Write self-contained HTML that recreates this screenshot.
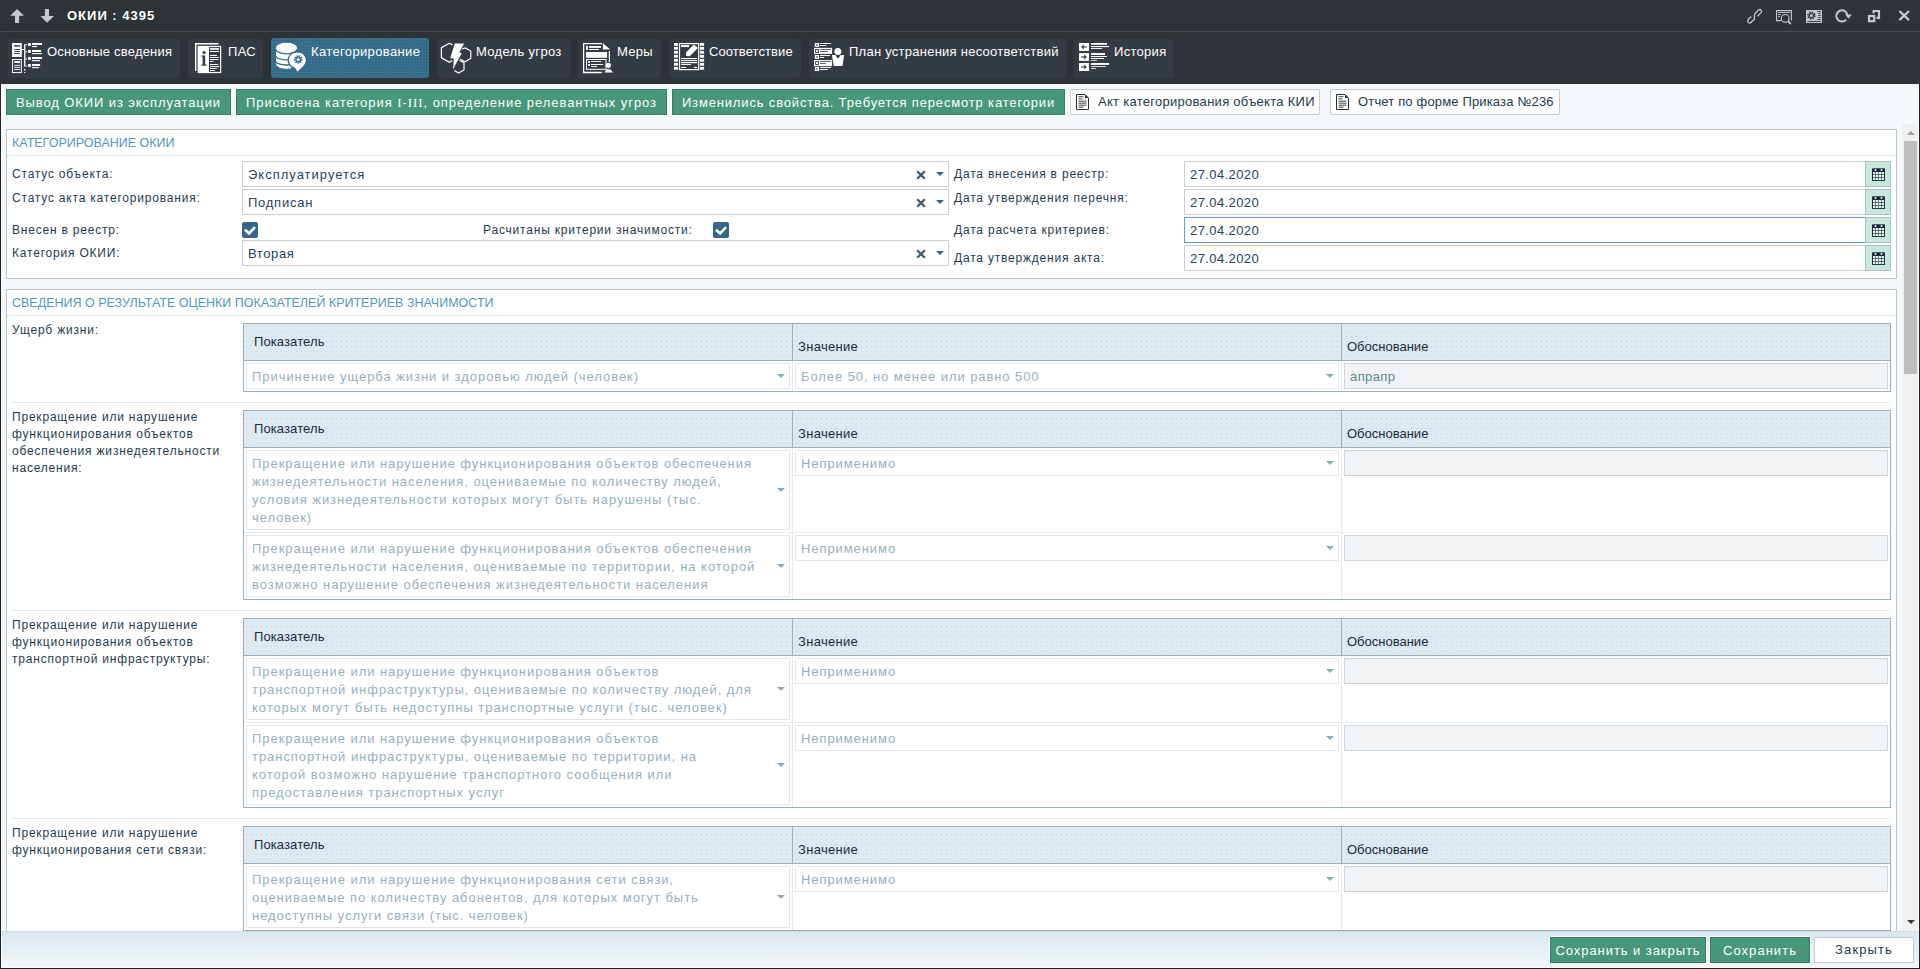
<!DOCTYPE html><html><head><meta charset="utf-8"><style>
*{box-sizing:border-box;margin:0;padding:0}
html,body{width:1920px;height:969px;overflow:hidden}
body{position:relative;background:#1e2427;font-family:"Liberation Sans",sans-serif;color:#1f3a4e}
.a{position:absolute;white-space:nowrap}
.tab{position:absolute;top:39px;height:39px;background:#353b44;border-radius:3px}
.tab.on{top:38px;height:40px;background:#356a8b;background-image:radial-gradient(rgba(80,170,120,.45) 0.5px,transparent 0.8px);background-size:3px 3px}
.tabt{position:absolute;top:45px;font-size:13px;letter-spacing:.32px;color:#fff;line-height:14px;white-space:nowrap}
.gbtn{position:absolute;top:89px;height:26px;background:#48977b;border:1px solid #367b62;color:#fff;font-size:13px;letter-spacing:.8px;line-height:25px;text-align:center;box-shadow:0 0 0 1px #fff;white-space:nowrap}
.wbtn{position:absolute;top:89px;height:26px;background:#fff;border:1px solid #c3ccd0;border-radius:2px;color:#203a4c;font-size:13px;letter-spacing:.28px;line-height:24px;white-space:nowrap}
.panel{position:absolute;left:6px;width:1891px;background:#fff;border:1px solid #bcc6cb}
.ph{position:absolute;font-size:12.5px;color:#5396be;letter-spacing:0;line-height:14px;white-space:nowrap}
.dots{position:absolute;height:1px;background-image:linear-gradient(90deg,#c8d0d4 50%,transparent 50%);background-size:2px 1px}
.lbl{position:absolute;font-size:12px;letter-spacing:.8px;color:#1f3b50;line-height:17px;white-space:nowrap}
.inp{position:absolute;height:26px;background:#fff;border:1px solid #c9ced1}
.val{position:absolute;font-size:13px;letter-spacing:.8px;color:#24445a;line-height:14px;white-space:nowrap}
.cal{position:absolute;width:26px;height:26px;background:#c7e6dc;border:1px solid #a9c0c6}
.chk{position:absolute;width:16px;height:16px;background:#34678a;border-radius:2px}
.tbl{position:absolute;left:243px;width:1648px;background:#fff;border:1px solid #9fb0b9}
.th{position:absolute;left:244px;width:1646px;height:37px;background:#ddeaf1;background-image:radial-gradient(rgba(150,165,175,.35) .5px,transparent .8px);background-size:5px 5px;border-bottom:1px solid #9fb0b9}
.thd{position:absolute;width:1px;height:38px;background:#9fb0b9}
.tbd{position:absolute;width:1px;background:#e4eaed}
.trd{position:absolute;left:244px;width:1646px;height:1px;background:#e4eaed}
.hdr{position:absolute;font-size:13px;color:#1d2d38;line-height:14px;white-space:nowrap}
.ti{position:absolute;background:#fff;border:1px solid #e0e6e9}
.ti3{position:absolute;height:26px;background:#f1f3f5;border:1px solid #ccd6dc}
.ph2{position:absolute;font-size:13px;letter-spacing:.95px;color:#97afbe;line-height:18px;white-space:nowrap}
.arr{position:absolute;width:0;height:0;border-left:4px solid transparent;border-right:4px solid transparent;border-top:4px solid #8ea8b7}
.xb{position:absolute}
</style></head><body>
<div class="a" style="left:0;top:0;width:1920px;height:84px;background:#2d3336"></div>
<div class="a" style="left:1px;top:31px;width:1919px;height:1px;background:#474d52"></div>
<svg class="a" style="left:0;top:0" width="60" height="30" viewBox="0 0 60 30"><path d="M17.1 8.9 L24 15.7 L19.1 15.7 L19.1 23 L15 23 L15 15.7 L10.2 15.7 Z" fill="#c8c8c8"/><path d="M47.1 22.8 L54 16.1 L49 16.1 L49 8.9 L44.9 8.9 L44.9 16.1 L40.4 16.1 Z" fill="#c8c8c8"/></svg>
<div class="a" style="left:67px;top:9px;font-size:13px;font-weight:bold;color:#fff;letter-spacing:1px;line-height:14px">ОКИИ : 4395</div>
<div class="tab" style="left:8px;width:172px"></div>
<div class="tab" style="left:188px;width:75px"></div>
<div class="tab on" style="left:271px;width:158px"></div>
<div class="tab" style="left:437px;width:133px"></div>
<div class="tab" style="left:578px;width:83px"></div>
<div class="tab" style="left:669px;width:132px"></div>
<div class="tab" style="left:809px;width:257px"></div>
<div class="tab" style="left:1074px;width:100px"></div>
<div class="tabt" style="left:47px;letter-spacing:0.2px">Основные сведения</div>
<div class="tabt" style="left:228px;letter-spacing:0.3px">ПАС</div>
<div class="tabt" style="left:311px;letter-spacing:0.36px">Категорирование</div>
<div class="tabt" style="left:476px;letter-spacing:0.32px">Модель угроз</div>
<div class="tabt" style="left:617px;letter-spacing:0.3px">Меры</div>
<div class="tabt" style="left:709px;letter-spacing:0.08px">Соответствие</div>
<div class="tabt" style="left:849px;letter-spacing:0.25px">План устранения несоответствий</div>
<div class="tabt" style="left:1114px;letter-spacing:0.3px">История</div>
<svg class="a" style="left:8px;top:38px" width="40" height="40" viewBox="0 0 40 40"><rect x="4.1" y="5" width="9.7" height="14" fill="#fff"/><rect x="6.2" y="7.2" width="5.8" height="1.5" fill="#353b44"/><rect x="6.2" y="11" width="5.8" height="0.9" fill="#353b44"/><rect x="6.2" y="13" width="5.8" height="0.9" fill="#353b44"/><rect x="6.2" y="15.1" width="5.8" height="0.9" fill="#353b44"/><rect x="4.6" y="21.5" width="8.7" height="13.1" fill="none" stroke="#fff" stroke-width="1"/><rect x="6.2" y="23.1" width="5.8" height="1.9" fill="#fff"/><rect x="6.2" y="26.9" width="5.8" height="0.9" fill="#fff"/><rect x="6.2" y="28.9" width="5.8" height="0.9" fill="#fff"/><rect x="6.2" y="31" width="5.8" height="0.9" fill="#fff"/><rect x="16.1" y="6.2" width="1.3" height="22.3" fill="#fff"/><rect x="13.8" y="11" width="2.3" height="1" fill="#fff"/><rect x="17.4" y="6.2" width="1.6" height="1" fill="#fff"/><rect x="17.4" y="13.4" width="1.6" height="1" fill="#fff"/><rect x="17.4" y="20.5" width="1.6" height="1" fill="#fff"/><rect x="17.4" y="27.5" width="1.6" height="1" fill="#fff"/><rect x="16.1" y="31" width="1.2" height="1.6" fill="#fff"/><rect x="16.1" y="34" width="1.2" height="1" fill="#fff"/><rect x="20" y="5" width="2.9" height="2.9" fill="#fff"/><rect x="20" y="12" width="2.9" height="2.9" fill="#fff"/><rect x="20" y="19" width="2.9" height="2.9" fill="#fff"/><rect x="20" y="26" width="2.9" height="2.9" fill="#fff"/><rect x="24" y="5" width="10.1" height="2" fill="#fff"/><rect x="24" y="8" width="5.1" height="1.1" fill="#fff"/><rect x="24" y="12" width="9.1" height="2" fill="#fff"/><rect x="24" y="15.1" width="10.1" height="1.1" fill="#fff"/><rect x="24" y="19" width="10.1" height="2" fill="#fff"/><rect x="24" y="22.1" width="8.1" height="1.1" fill="#fff"/><rect x="24" y="26" width="8.1" height="2" fill="#fff"/><rect x="24" y="29.1" width="7.1" height="1.1" fill="#fff"/></svg>
<svg class="a" style="left:190px;top:38px" width="40" height="40" viewBox="0 0 40 40"><path d="M5.7 33 V5.7 H28.5" fill="none" stroke="#fff" stroke-width="1.4"/><rect x="7.6" y="7.85" width="23.6" height="27.25" fill="#fff"/><circle cx="14" cy="14.5" r="1.6" fill="#353b44"/><rect x="12.6" y="17.4" width="2.6" height="9.8" fill="#353b44"/><rect x="11.2" y="26.6" width="5.3" height="1.1" fill="#353b44"/><rect x="11.2" y="17.6" width="2.4" height="0.9" fill="#353b44"/><rect x="19" y="9.1" width="11" height="24.8" fill="#353b44"/><rect x="20" y="10.1" width="9" height="1.7" fill="#fff"/><rect x="20" y="13" width="9" height="1" fill="#fff"/><rect x="20" y="16.9" width="7" height="1.1" fill="#fff"/><rect x="20" y="19" width="9" height="1" fill="#fff"/><rect x="20" y="21" width="8.2" height="1.1" fill="#fff"/><rect x="20" y="23.1" width="3.1" height="0.9" fill="#fff"/><rect x="20" y="26" width="8.2" height="1" fill="#fff"/><rect x="20" y="28.1" width="9" height="1" fill="#fff"/><rect x="20" y="30.1" width="7" height="0.9" fill="#fff"/><rect x="20" y="32" width="5" height="1" fill="#fff"/></svg>
<svg class="a" style="left:271px;top:38px" width="40" height="40" viewBox="0 0 40 40"><path d="M5 9.4 A10.5 4.6 0 0 1 26 9.4 V26 A10.5 4.8 0 0 1 5 26 Z" fill="#fff"/><path d="M5 11.2 A10.5 4.6 0 0 0 26 11.2" fill="none" stroke="#356a8b" stroke-width="1.3"/><path d="M5 18.2 A10.5 3.6 0 0 0 26 18.2" fill="none" stroke="#356a8b" stroke-width="1.3"/><path d="M5 23.4 A10.5 3.6 0 0 0 26 23.4" fill="none" stroke="#356a8b" stroke-width="1.3"/><path d="M27.2 14.2 A8.1 8.1 0 0 1 33.6 27.4 L26.4 34.8 L23.6 30.2 A8.1 8.1 0 0 1 27.2 14.2 Z" fill="#fff" stroke="#356a8b" stroke-width="1.3"/><circle cx="27.3" cy="21.5" r="3.4" fill="none" stroke="#356a8b" stroke-width="1.8" stroke-dasharray="1.35 0.95"/><circle cx="27.3" cy="21.5" r="2.3" fill="none" stroke="#356a8b" stroke-width="1.4"/></svg>
<svg class="a" style="left:437px;top:38px" width="40" height="40" viewBox="0 0 40 40"><path d="M12.4 5.2 L4.4 9.6 L4.4 19.8 L12.4 24.3 L15.4 22.6 M15.6 7 L12.4 5.2" fill="none" stroke="#fff" stroke-width="1.2"/><path d="M25 11 L28.3 9.9 L33.8 13 L33.8 20.3 L28 23.7 L23.3 21.3" fill="none" stroke="#fff" stroke-width="1.2"/><path d="M22.6 22.3 L27 24.8 L27 32 L21.5 35 L17.3 32.6" fill="none" stroke="#fff" stroke-width="1.2"/><polygon points="17.8,5.4 27.1,5.4 22.3,14.5 24.8,15.3 15.9,31.4 16.9,20.7 13.2,20.2" fill="#fff"/></svg>
<svg class="a" style="left:578px;top:38px" width="40" height="40" viewBox="0 0 40 40"><path d="M24 5.6 H5.6 V34.5 H24" fill="none" stroke="#fff" stroke-width="1.3"/><rect x="30.8" y="13" width="1.2" height="11" fill="#fff"/><polygon points="24.8,5 32.2,11.6 24.8,11.6" fill="#fff"/><rect x="8" y="7.9" width="1.9" height="4.1" fill="#fff"/><rect x="11" y="8" width="12" height="1.9" fill="#fff"/><rect x="11" y="11" width="10" height="1" fill="#fff"/><rect x="8" y="14" width="21.1" height="5.8" fill="#fff"/><rect x="8.5" y="21.5" width="19.5" height="9.8" fill="none" stroke="#fff" stroke-width="1"/><rect x="10.1" y="23.1" width="1.9" height="1.9" fill="#fff"/><rect x="10.1" y="26" width="1.9" height="2" fill="#fff"/><rect x="13" y="23.1" width="10.1" height="0.9" fill="#fff"/><rect x="13" y="26" width="12.2" height="1" fill="#fff"/><rect x="13" y="28.1" width="6" height="0.9" fill="#fff"/><circle cx="30.4" cy="27.3" r="2.6" fill="#fff"/><polygon points="26.4,34.4 35.1,34.4 32.2,31.2 28.5,31.2" fill="#fff"/></svg>
<svg class="a" style="left:669px;top:38px" width="40" height="40" viewBox="0 0 40 40"><rect x="5" y="5" width="3.9" height="2.8" fill="#fff"/><rect x="5" y="8.9" width="3.9" height="2.8" fill="#fff"/><rect x="5" y="12.9" width="3.9" height="2.8" fill="#fff"/><rect x="5" y="16.9" width="3.9" height="2.8" fill="#fff"/><rect x="5" y="20.9" width="3.9" height="2.8" fill="#fff"/><rect x="5" y="24.9" width="3.9" height="2.8" fill="#fff"/><rect x="5" y="28.9" width="3.9" height="2.8" fill="#fff"/><rect x="31" y="5" width="4.1" height="2.8" fill="#fff"/><rect x="31" y="8.9" width="4.1" height="2.8" fill="#fff"/><rect x="31" y="12.9" width="4.1" height="2.8" fill="#fff"/><rect x="31" y="16.9" width="4.1" height="2.8" fill="#fff"/><rect x="31" y="20.9" width="4.1" height="2.8" fill="#fff"/><rect x="31" y="24.9" width="4.1" height="2.8" fill="#fff"/><rect x="31" y="28.9" width="4.1" height="2.8" fill="#fff"/><rect x="10.5" y="5.6" width="19.2" height="26" fill="none" stroke="#fff" stroke-width="1.2"/><rect x="12" y="7" width="8" height="2.1" fill="#fff"/><rect x="12" y="20" width="16.1" height="1.1" fill="#fff"/><rect x="12" y="22.1" width="16.1" height="1" fill="#fff"/><rect x="12" y="24" width="16.1" height="1.2" fill="#fff"/><rect x="12" y="26" width="9.9" height="1" fill="#fff"/><rect x="12" y="28.9" width="5" height="1.1" fill="#fff"/><rect x="25" y="28.9" width="3.1" height="1.1" fill="#fff"/><polygon points="17,14.5 24.8,6.6 28.9,9.9 20.7,18.2 17.1,18" fill="#fff"/></svg>
<svg class="a" style="left:809px;top:38px" width="40" height="40" viewBox="0 0 40 40"><rect x="5.8" y="5" width="4.3" height="3.9" fill="#fff"/><rect x="7.3" y="6.4" width="1.3" height="1.2" fill="#000"/><rect x="11" y="5" width="11.1" height="1" fill="#fff"/><rect x="11" y="7" width="6.1" height="1.05" fill="#fff"/><rect x="5" y="9.9" width="18.1" height="6" fill="#fff"/><rect x="6.6" y="11.5" width="3" height="2.9" fill="none" stroke="#353b44" stroke-width="0.9"/><rect x="11.2" y="11.2" width="10.7" height="0.8" fill="#353b44"/><rect x="11.2" y="13" width="7.8" height="0.8" fill="#353b44"/><rect x="5.8" y="17" width="4.3" height="3.9" fill="#fff"/><rect x="7.3" y="18.4" width="1.3" height="1.2" fill="#000"/><rect x="11" y="17" width="10" height="1" fill="#fff"/><rect x="11" y="19" width="4.1" height="1" fill="#fff"/><rect x="5" y="22.1" width="18.1" height="6" fill="#fff"/><rect x="6.6" y="23.6" width="3" height="2.9" fill="none" stroke="#353b44" stroke-width="0.9"/><rect x="11.2" y="23.2" width="10.7" height="0.8" fill="#353b44"/><rect x="11.2" y="25.2" width="5.8" height="0.8" fill="#353b44"/><rect x="5.8" y="28.9" width="4.3" height="4.1" fill="#fff"/><rect x="7.3" y="30.4" width="1.3" height="1.2" fill="#000"/><rect x="11" y="28.9" width="11.1" height="1" fill="#fff"/><rect x="11" y="31" width="8" height="1" fill="#fff"/><circle cx="28.9" cy="13.4" r="3.5" fill="#fff"/><polygon points="22.9,17 26.3,17 29,20.7 31.7,17 35.1,17 33.5,28.1 24.8,28.1" fill="#fff"/></svg>
<svg class="a" style="left:1074px;top:38px" width="40" height="40" viewBox="0 0 40 40"><rect x="5" y="5" width="10.1" height="8" fill="#fff"/><rect x="5" y="15.1" width="10.1" height="7.8" fill="#fff"/><rect x="5" y="25" width="10.1" height="8" fill="#fff"/><rect x="8.3" y="8.4" width="4.5" height="1.1" fill="#353b44"/><polygon points="7.2,8.9 9.7,6.2 9.7,11.6" fill="#353b44"/><rect x="7.2" y="18.4" width="4" height="1.2" fill="#353b44"/><polygon points="12.8,19 10.3,16.3 10.3,21.7" fill="#353b44"/><rect x="7.2" y="28.3" width="4" height="1.2" fill="#353b44"/><polygon points="12.8,28.9 10.3,26.2 10.3,31.6" fill="#353b44"/><rect x="17" y="5" width="16" height="1.8" fill="#fff"/><rect x="17" y="8" width="18.1" height="1.1" fill="#fff"/><rect x="17" y="10.1" width="11.1" height="0.9" fill="#fff"/><rect x="17" y="15.1" width="14" height="1.9" fill="#fff"/><rect x="17" y="18" width="16" height="1" fill="#fff"/><rect x="17" y="20" width="13" height="1" fill="#fff"/><rect x="17" y="22.1" width="5.9" height="0.8" fill="#fff"/><rect x="17" y="25" width="18.1" height="1.9" fill="#fff"/><rect x="17" y="28.1" width="15" height="0.8" fill="#fff"/><rect x="17" y="30.2" width="4.9" height="0.8" fill="#fff"/></svg>
<div class="a" style="left:1px;top:84px;width:1918px;height:847px;background:#f3f8fb;border-left:1px solid #fff"></div>
<div class="gbtn" style="left:6px;width:225px;letter-spacing:.9px">Вывод ОКИИ из эксплуатации</div>
<div class="gbtn" style="left:236px;width:431px;letter-spacing:.94px">Присвоена категория <span style="font-family:Liberation Serif">I</span>-<span style="font-family:Liberation Serif">III</span>, определение релевантных угроз</div>
<div class="gbtn" style="left:672px;width:393px;letter-spacing:.84px">Изменились свойства. Требуется пересмотр категории</div>
<div class="wbtn" style="left:1070px;width:250px"><span style="position:absolute;left:27px">Акт категорирования объекта КИИ</span></div>
<div class="wbtn" style="left:1330px;width:230px"><span style="position:absolute;left:27px;letter-spacing:.16px">Отчет по форме Приказа №236</span></div>
<div class="panel" style="top:129px;height:150px"></div>
<div class="ph" style="left:12px;top:136px">КАТЕГОРИРОВАНИЕ ОКИИ</div>
<div class="dots" style="left:7px;top:155px;width:1889px"></div>
<div class="lbl" style="left:12px;top:166px">Статус объекта:</div>
<div class="lbl" style="left:12px;top:190px">Статус акта категорирования:</div>
<div class="lbl" style="left:12px;top:222px">Внесен в реестр:</div>
<div class="lbl" style="left:12px;top:245px">Категория ОКИИ:</div>
<div class="lbl" style="left:483px;top:222px">Расчитаны критерии значимости:</div>
<div class="inp" style="left:242px;top:161px;width:707px"></div>
<div class="val" style="left:248px;top:168px;letter-spacing:1.0px">Эксплуатируется</div>
<div class="inp" style="left:242px;top:189px;width:707px"></div>
<div class="val" style="left:248px;top:196px;letter-spacing:0.75px">Подписан</div>
<div class="inp" style="left:242px;top:240px;width:707px"></div>
<div class="val" style="left:248px;top:247px;letter-spacing:0.6px">Вторая</div>
<div class="chk" style="left:242px;top:222px"></div>
<div class="chk" style="left:713px;top:222px"></div>
<div class="lbl" style="left:954px;top:166px">Дата внесения в реестр:</div>
<div class="lbl" style="left:954px;top:190px">Дата утверждения перечня:</div>
<div class="lbl" style="left:954px;top:222px">Дата расчета критериев:</div>
<div class="lbl" style="left:954px;top:250px">Дата утверждения акта:</div>
<div class="inp" style="left:1184px;top:161px;width:682px"></div>
<div class="cal" style="left:1865px;top:161px"></div>
<div class="val" style="left:1190px;top:168px;letter-spacing:.4px">27.04.2020</div>
<div class="inp" style="left:1184px;top:189px;width:682px"></div>
<div class="cal" style="left:1865px;top:189px"></div>
<div class="val" style="left:1190px;top:196px;letter-spacing:.4px">27.04.2020</div>
<div class="inp" style="left:1184px;top:217px;width:682px;border-color:#5aa0dc"></div>
<div class="cal" style="left:1865px;top:217px"></div>
<div class="val" style="left:1190px;top:224px;letter-spacing:.4px">27.04.2020</div>
<div class="inp" style="left:1184px;top:245px;width:682px"></div>
<div class="cal" style="left:1865px;top:245px"></div>
<div class="val" style="left:1190px;top:252px;letter-spacing:.4px">27.04.2020</div>
<svg class="a" style="left:1740px;top:4px" width="180" height="24" viewBox="1740 4 180 24"><path d="M1754.4 14.2 V19.3 L1750.8 22.6 Q1749 23.6 1747.9 22 Q1747 20.8 1748.4 19.2 L1751.3 16.6" fill="none" stroke="#c8c8c8" stroke-width="1.3"/><path d="M1754.4 14.2 L1758.4 10 Q1760 8.8 1761.2 10.3 Q1762 11.6 1760.8 12.9 L1757.6 16.2" fill="none" stroke="#c8c8c8" stroke-width="1.3"/><path d="M1781 20.6 H1776.6 V10.6 H1791.4 V20.5" fill="none" stroke="#c8c8c8" stroke-width="1.1"/><rect x="1778" y="12.1" width="12" height="0.9" fill="#c8c8c8"/><rect x="1778" y="14" width="3" height="0.9" fill="#c8c8c8"/><rect x="1778" y="16" width="2" height="0.9" fill="#c8c8c8"/><circle cx="1785.2" cy="18.4" r="3.9" fill="none" stroke="#c8c8c8" stroke-width="1.2"/><path d="M1788 21.2 L1790.8 24" stroke="#c8c8c8" stroke-width="1.8"/><rect x="1806" y="10" width="16" height="13" fill="#c8c8c8"/><circle cx="1811.4" cy="15.6" r="3.2" fill="none" stroke="#2d3336" stroke-width="2" stroke-dasharray="1.4 1.1"/><circle cx="1811.4" cy="15.6" r="2.1" fill="none" stroke="#2d3336" stroke-width="1.1"/><rect x="1817.2" y="11" width="3.6" height="0.9" fill="#2d3336"/><rect x="1818.2" y="13" width="2.6" height="0.9" fill="#2d3336"/><rect x="1818.2" y="15" width="2.6" height="0.9" fill="#2d3336"/><rect x="1818.2" y="17" width="2.6" height="0.9" fill="#2d3336"/><rect x="1817.2" y="19" width="3.6" height="0.9" fill="#2d3336"/><rect x="1807.3" y="21" width="13.5" height="0.9" fill="#2d3336"/><path d="M1846.2 19.6 A5.6 5.6 0 1 1 1847.5 15.2" fill="none" stroke="#c8c8c8" stroke-width="2"/><polygon points="1845.1,14.4 1851.9,14.4 1848.5,18.8" fill="#c8c8c8"/><path d="M1873.6 13.6 V11 H1879 V17.9 H1876.4" fill="none" stroke="#c8c8c8" stroke-width="2.2"/><rect x="1869" y="16" width="5.2" height="5.2" fill="none" stroke="#c8c8c8" stroke-width="2.2"/><path d="M1899.4 11 L1909 20.2 M1909 11 L1899.4 20.2" stroke="#c8c8c8" stroke-width="2.4"/></svg>
<svg class="a" style="left:1076px;top:94px" width="13" height="16" viewBox="0 0 13 16"><path d="M0.5 0.5 H9 L12.5 4 V15.5 H0.5 Z" fill="#fff" stroke="#2a2f33" stroke-width="1"/><path d="M9 0.5 V4 H12.5 Z" fill="#2a2f33"/><rect x="2.5" y="2.3" width="5" height="0.9" fill="#2a2f33"/><rect x="2.5" y="4.5" width="4" height="0.9" fill="#2a2f33"/><rect x="2.5" y="6.7" width="8" height="0.9" fill="#2a2f33"/><rect x="2.5" y="8.7" width="8" height="0.9" fill="#2a2f33"/><rect x="2.5" y="10.7" width="8" height="0.9" fill="#2a2f33"/><rect x="2.5" y="12.7" width="5" height="0.9" fill="#2a2f33"/></svg>
<svg class="a" style="left:1336px;top:94px" width="13" height="16" viewBox="0 0 13 16"><path d="M0.5 0.5 H9 L12.5 4 V15.5 H0.5 Z" fill="#fff" stroke="#2a2f33" stroke-width="1"/><path d="M9 0.5 V4 H12.5 Z" fill="#2a2f33"/><rect x="2.5" y="2.3" width="5" height="0.9" fill="#2a2f33"/><rect x="2.5" y="4.5" width="4" height="0.9" fill="#2a2f33"/><rect x="2.5" y="6.7" width="8" height="0.9" fill="#2a2f33"/><rect x="2.5" y="8.7" width="8" height="0.9" fill="#2a2f33"/><rect x="2.5" y="10.7" width="8" height="0.9" fill="#2a2f33"/><rect x="2.5" y="12.7" width="5" height="0.9" fill="#2a2f33"/></svg>
<svg class="a" style="left:242px;top:222px" width="16" height="16" viewBox="0 0 16 16"><path d="M3 7.8 L7 11.4 L13 5.2" fill="none" stroke="#fff" stroke-width="2.6"/></svg>
<svg class="a" style="left:713px;top:222px" width="16" height="16" viewBox="0 0 16 16"><path d="M3 7.8 L7 11.4 L13 5.2" fill="none" stroke="#fff" stroke-width="2.6"/></svg>
<svg class="a" style="left:916px;top:170px" width="10" height="10" viewBox="0 0 10 10"><path d="M1.2 1.2 L8.8 8.8 M8.8 1.2 L1.2 8.8" stroke="#3f5c68" stroke-width="2.2"/></svg>
<div class="arr" style="left:936px;top:172px;border-top-color:#2f6a8c"></div>
<svg class="a" style="left:916px;top:198px" width="10" height="10" viewBox="0 0 10 10"><path d="M1.2 1.2 L8.8 8.8 M8.8 1.2 L1.2 8.8" stroke="#3f5c68" stroke-width="2.2"/></svg>
<div class="arr" style="left:936px;top:200px;border-top-color:#2f6a8c"></div>
<svg class="a" style="left:916px;top:249px" width="10" height="10" viewBox="0 0 10 10"><path d="M1.2 1.2 L8.8 8.8 M8.8 1.2 L1.2 8.8" stroke="#3f5c68" stroke-width="2.2"/></svg>
<div class="arr" style="left:936px;top:251px;border-top-color:#2f6a8c"></div>
<svg class="a" style="left:1872px;top:168px" width="13" height="13" viewBox="0 0 13 13"><path d="M0 1.2 Q0 0.2 1 0.2 H12 Q13 0.2 13 1.2 V13 H0 Z" fill="#1a2a3a"/><rect x="1.0" y="4.0" width="2.4" height="2.3" fill="#e2f4ee"/><rect x="1.0" y="6.9" width="2.4" height="2.3" fill="#e2f4ee"/><rect x="1.0" y="9.8" width="2.4" height="2.3" fill="#e2f4ee"/><rect x="3.9" y="4.0" width="2.4" height="2.3" fill="#e2f4ee"/><rect x="3.9" y="6.9" width="2.4" height="2.3" fill="#e2f4ee"/><rect x="3.9" y="9.8" width="2.4" height="2.3" fill="#e2f4ee"/><rect x="6.8" y="4.0" width="2.4" height="2.3" fill="#e2f4ee"/><rect x="6.8" y="6.9" width="2.4" height="2.3" fill="#e2f4ee"/><rect x="6.8" y="9.8" width="2.4" height="2.3" fill="#e2f4ee"/><rect x="9.7" y="4.0" width="2.4" height="2.3" fill="#e2f4ee"/><rect x="9.7" y="6.9" width="2.4" height="2.3" fill="#e2f4ee"/><rect x="9.7" y="9.8" width="2.4" height="2.3" fill="#e2f4ee"/><ellipse cx="3.5" cy="1.9" rx="0.9" ry="1.2" fill="#d8eef0"/><ellipse cx="9.5" cy="1.9" rx="0.9" ry="1.2" fill="#d8eef0"/></svg>
<svg class="a" style="left:1872px;top:196px" width="13" height="13" viewBox="0 0 13 13"><path d="M0 1.2 Q0 0.2 1 0.2 H12 Q13 0.2 13 1.2 V13 H0 Z" fill="#1a2a3a"/><rect x="1.0" y="4.0" width="2.4" height="2.3" fill="#e2f4ee"/><rect x="1.0" y="6.9" width="2.4" height="2.3" fill="#e2f4ee"/><rect x="1.0" y="9.8" width="2.4" height="2.3" fill="#e2f4ee"/><rect x="3.9" y="4.0" width="2.4" height="2.3" fill="#e2f4ee"/><rect x="3.9" y="6.9" width="2.4" height="2.3" fill="#e2f4ee"/><rect x="3.9" y="9.8" width="2.4" height="2.3" fill="#e2f4ee"/><rect x="6.8" y="4.0" width="2.4" height="2.3" fill="#e2f4ee"/><rect x="6.8" y="6.9" width="2.4" height="2.3" fill="#e2f4ee"/><rect x="6.8" y="9.8" width="2.4" height="2.3" fill="#e2f4ee"/><rect x="9.7" y="4.0" width="2.4" height="2.3" fill="#e2f4ee"/><rect x="9.7" y="6.9" width="2.4" height="2.3" fill="#e2f4ee"/><rect x="9.7" y="9.8" width="2.4" height="2.3" fill="#e2f4ee"/><ellipse cx="3.5" cy="1.9" rx="0.9" ry="1.2" fill="#d8eef0"/><ellipse cx="9.5" cy="1.9" rx="0.9" ry="1.2" fill="#d8eef0"/></svg>
<svg class="a" style="left:1872px;top:224px" width="13" height="13" viewBox="0 0 13 13"><path d="M0 1.2 Q0 0.2 1 0.2 H12 Q13 0.2 13 1.2 V13 H0 Z" fill="#1a2a3a"/><rect x="1.0" y="4.0" width="2.4" height="2.3" fill="#e2f4ee"/><rect x="1.0" y="6.9" width="2.4" height="2.3" fill="#e2f4ee"/><rect x="1.0" y="9.8" width="2.4" height="2.3" fill="#e2f4ee"/><rect x="3.9" y="4.0" width="2.4" height="2.3" fill="#e2f4ee"/><rect x="3.9" y="6.9" width="2.4" height="2.3" fill="#e2f4ee"/><rect x="3.9" y="9.8" width="2.4" height="2.3" fill="#e2f4ee"/><rect x="6.8" y="4.0" width="2.4" height="2.3" fill="#e2f4ee"/><rect x="6.8" y="6.9" width="2.4" height="2.3" fill="#e2f4ee"/><rect x="6.8" y="9.8" width="2.4" height="2.3" fill="#e2f4ee"/><rect x="9.7" y="4.0" width="2.4" height="2.3" fill="#e2f4ee"/><rect x="9.7" y="6.9" width="2.4" height="2.3" fill="#e2f4ee"/><rect x="9.7" y="9.8" width="2.4" height="2.3" fill="#e2f4ee"/><ellipse cx="3.5" cy="1.9" rx="0.9" ry="1.2" fill="#d8eef0"/><ellipse cx="9.5" cy="1.9" rx="0.9" ry="1.2" fill="#d8eef0"/></svg>
<svg class="a" style="left:1872px;top:252px" width="13" height="13" viewBox="0 0 13 13"><path d="M0 1.2 Q0 0.2 1 0.2 H12 Q13 0.2 13 1.2 V13 H0 Z" fill="#1a2a3a"/><rect x="1.0" y="4.0" width="2.4" height="2.3" fill="#e2f4ee"/><rect x="1.0" y="6.9" width="2.4" height="2.3" fill="#e2f4ee"/><rect x="1.0" y="9.8" width="2.4" height="2.3" fill="#e2f4ee"/><rect x="3.9" y="4.0" width="2.4" height="2.3" fill="#e2f4ee"/><rect x="3.9" y="6.9" width="2.4" height="2.3" fill="#e2f4ee"/><rect x="3.9" y="9.8" width="2.4" height="2.3" fill="#e2f4ee"/><rect x="6.8" y="4.0" width="2.4" height="2.3" fill="#e2f4ee"/><rect x="6.8" y="6.9" width="2.4" height="2.3" fill="#e2f4ee"/><rect x="6.8" y="9.8" width="2.4" height="2.3" fill="#e2f4ee"/><rect x="9.7" y="4.0" width="2.4" height="2.3" fill="#e2f4ee"/><rect x="9.7" y="6.9" width="2.4" height="2.3" fill="#e2f4ee"/><rect x="9.7" y="9.8" width="2.4" height="2.3" fill="#e2f4ee"/><ellipse cx="3.5" cy="1.9" rx="0.9" ry="1.2" fill="#d8eef0"/><ellipse cx="9.5" cy="1.9" rx="0.9" ry="1.2" fill="#d8eef0"/></svg>
<div class="panel" style="top:289px;height:660px"></div>
<div class="ph" style="left:12px;top:296px">СВЕДЕНИЯ О РЕЗУЛЬТАТЕ ОЦЕНКИ ПОКАЗАТЕЛЕЙ КРИТЕРИЕВ ЗНАЧИМОСТИ</div>
<div class="dots" style="left:7px;top:315px;width:1889px"></div>
<div class="tbl" style="top:323px;height:69px"></div>
<div class="th" style="top:324px"></div>
<div class="thd" style="left:792px;top:323px"></div>
<div class="thd" style="left:1341px;top:323px"></div>
<div class="tbd" style="left:792px;top:361px;height:30px"></div>
<div class="tbd" style="left:1341px;top:361px;height:30px"></div>
<div class="hdr" style="left:254px;top:335px;letter-spacing:.1px">Показатель</div>
<div class="hdr" style="left:798px;top:340px;letter-spacing:.3px">Значение</div>
<div class="hdr" style="left:1347px;top:340px">Обоснование</div>
<div class="lbl" style="left:12px;top:322px">Ущерб жизни:</div>
<div class="ti" style="left:246px;top:363px;width:544px;height:26px"></div>
<div class="ph2" style="left:252px;top:368px">Причинение ущерба жизни и здоровью людей (человек)</div>
<div class="arr" style="left:777px;top:374px"></div>
<div class="ti" style="left:795px;top:363px;width:544px;height:26px"></div>
<div class="ph2" style="left:801px;top:368px;letter-spacing:.92px">Более 50, но менее или равно 500</div>
<div class="arr" style="left:1326px;top:374px"></div>
<div class="ti3" style="left:1344px;top:363px;width:544px"></div>
<div class="ph2" style="left:1350px;top:368px;color:#5b8a84;letter-spacing:.4px">апрапр</div>
<div class="a" style="left:12px;top:402px;width:1878px;height:1px;background:#e6eaec"></div>
<div class="tbl" style="top:410px;height:190px"></div>
<div class="th" style="top:411px"></div>
<div class="thd" style="left:792px;top:410px"></div>
<div class="thd" style="left:1341px;top:410px"></div>
<div class="tbd" style="left:792px;top:448px;height:151px"></div>
<div class="tbd" style="left:1341px;top:448px;height:151px"></div>
<div class="hdr" style="left:254px;top:422px;letter-spacing:.1px">Показатель</div>
<div class="hdr" style="left:798px;top:427px;letter-spacing:.3px">Значение</div>
<div class="hdr" style="left:1347px;top:427px">Обоснование</div>
<div class="lbl" style="left:12px;top:409px">Прекращение или нарушение<br>функционирования объектов<br>обеспечения жизнедеятельности<br>населения:</div>
<div class="ti" style="left:246px;top:450px;width:544px;height:80px"></div>
<div class="ph2" style="left:252px;top:455px">Прекращение или нарушение функционирования объектов обеспечения<br>жизнедеятельности населения, оцениваемые по количеству людей,<br>условия жизнедеятельности которых могут быть нарушены (тыс.<br>человек)</div>
<div class="arr" style="left:777px;top:488px"></div>
<div class="ti" style="left:795px;top:450px;width:544px;height:26px"></div>
<div class="ph2" style="left:801px;top:455px;letter-spacing:.92px">Неприменимо</div>
<div class="arr" style="left:1326px;top:461px"></div>
<div class="ti3" style="left:1344px;top:450px;width:544px"></div>
<div class="trd" style="top:532px"></div>
<div class="ti" style="left:246px;top:535px;width:544px;height:62px"></div>
<div class="ph2" style="left:252px;top:540px">Прекращение или нарушение функционирования объектов обеспечения<br>жизнедеятельности населения, оцениваемые по территории, на которой<br>возможно нарушение обеспечения жизнедеятельности населения</div>
<div class="arr" style="left:777px;top:564px"></div>
<div class="ti" style="left:795px;top:535px;width:544px;height:26px"></div>
<div class="ph2" style="left:801px;top:540px;letter-spacing:.92px">Неприменимо</div>
<div class="arr" style="left:1326px;top:546px"></div>
<div class="ti3" style="left:1344px;top:535px;width:544px"></div>
<div class="a" style="left:12px;top:610px;width:1878px;height:1px;background:#e6eaec"></div>
<div class="tbl" style="top:618px;height:190px"></div>
<div class="th" style="top:619px"></div>
<div class="thd" style="left:792px;top:618px"></div>
<div class="thd" style="left:1341px;top:618px"></div>
<div class="tbd" style="left:792px;top:656px;height:151px"></div>
<div class="tbd" style="left:1341px;top:656px;height:151px"></div>
<div class="hdr" style="left:254px;top:630px;letter-spacing:.1px">Показатель</div>
<div class="hdr" style="left:798px;top:635px;letter-spacing:.3px">Значение</div>
<div class="hdr" style="left:1347px;top:635px">Обоснование</div>
<div class="lbl" style="left:12px;top:617px">Прекращение или нарушение<br>функционирования объектов<br>транспортной инфраструктуры:</div>
<div class="ti" style="left:246px;top:658px;width:544px;height:62px"></div>
<div class="ph2" style="left:252px;top:663px">Прекращение или нарушение функционирования объектов<br>транспортной инфраструктуры, оцениваемые по количеству людей, для<br>которых могут быть недоступны транспортные услуги (тыс. человек)</div>
<div class="arr" style="left:777px;top:687px"></div>
<div class="ti" style="left:795px;top:658px;width:544px;height:26px"></div>
<div class="ph2" style="left:801px;top:663px;letter-spacing:.92px">Неприменимо</div>
<div class="arr" style="left:1326px;top:669px"></div>
<div class="ti3" style="left:1344px;top:658px;width:544px"></div>
<div class="trd" style="top:722px"></div>
<div class="ti" style="left:246px;top:725px;width:544px;height:80px"></div>
<div class="ph2" style="left:252px;top:730px">Прекращение или нарушение функционирования объектов<br>транспортной инфраструктуры, оцениваемые по территории, на<br>которой возможно нарушение транспортного сообщения или<br>предоставления транспортных услуг</div>
<div class="arr" style="left:777px;top:763px"></div>
<div class="ti" style="left:795px;top:725px;width:544px;height:26px"></div>
<div class="ph2" style="left:801px;top:730px;letter-spacing:.92px">Неприменимо</div>
<div class="arr" style="left:1326px;top:736px"></div>
<div class="ti3" style="left:1344px;top:725px;width:544px"></div>
<div class="a" style="left:12px;top:818px;width:1878px;height:1px;background:#e6eaec"></div>
<div class="tbl" style="top:826px;height:105px"></div>
<div class="th" style="top:827px"></div>
<div class="thd" style="left:792px;top:826px"></div>
<div class="thd" style="left:1341px;top:826px"></div>
<div class="tbd" style="left:792px;top:864px;height:66px"></div>
<div class="tbd" style="left:1341px;top:864px;height:66px"></div>
<div class="hdr" style="left:254px;top:838px;letter-spacing:.1px">Показатель</div>
<div class="hdr" style="left:798px;top:843px;letter-spacing:.3px">Значение</div>
<div class="hdr" style="left:1347px;top:843px">Обоснование</div>
<div class="lbl" style="left:12px;top:825px">Прекращение или нарушение<br>функционирования сети связи:</div>
<div class="ti" style="left:246px;top:866px;width:544px;height:62px"></div>
<div class="ph2" style="left:252px;top:871px">Прекращение или нарушение функционирования сети связи,<br>оцениваемые по количеству абонентов, для которых могут быть<br>недоступны услуги связи (тыс. человек)</div>
<div class="arr" style="left:777px;top:895px"></div>
<div class="ti" style="left:795px;top:866px;width:544px;height:26px"></div>
<div class="ph2" style="left:801px;top:871px;letter-spacing:.92px">Неприменимо</div>
<div class="arr" style="left:1326px;top:877px"></div>
<div class="ti3" style="left:1344px;top:866px;width:544px"></div>
<div class="a" style="left:12px;top:1026px;width:1878px;height:1px;background:#e6eaec"></div>
<div class="a" style="left:1902px;top:124px;width:16px;height:807px;background:#f0f0f0"></div>
<div class="a" style="left:1904px;top:141px;width:13px;height:233px;background:#bdbdbd"></div>
<div class="arr" style="left:1907px;top:131px;border-top:0;border-bottom:4px solid #a0a0a0"></div>
<div class="arr" style="left:1907px;top:920px;border-top:4px solid #3a3a3a"></div>
<div class="a" style="left:1px;top:931px;width:1918px;height:37px;border-left:1px solid #fff;border-bottom:1px solid #fafcfd;background:linear-gradient(#d9e7ef,#f2f6f8)"></div>
<div class="dots" style="left:2px;top:931px;width:1916px;background-image:linear-gradient(90deg,#c2d0d8 60%,transparent 60%);background-size:4px 1px"></div>
<div class="gbtn" style="left:1550px;top:937px;width:156px;letter-spacing:.94px">Сохранить и закрыть</div>
<div class="gbtn" style="left:1710px;top:937px;width:100px;letter-spacing:1.04px">Сохранить</div>
<div class="wbtn" style="left:1814px;top:937px;width:100px;text-align:center;border-radius:0;letter-spacing:1.1px">Закрыть</div>
</body></html>
